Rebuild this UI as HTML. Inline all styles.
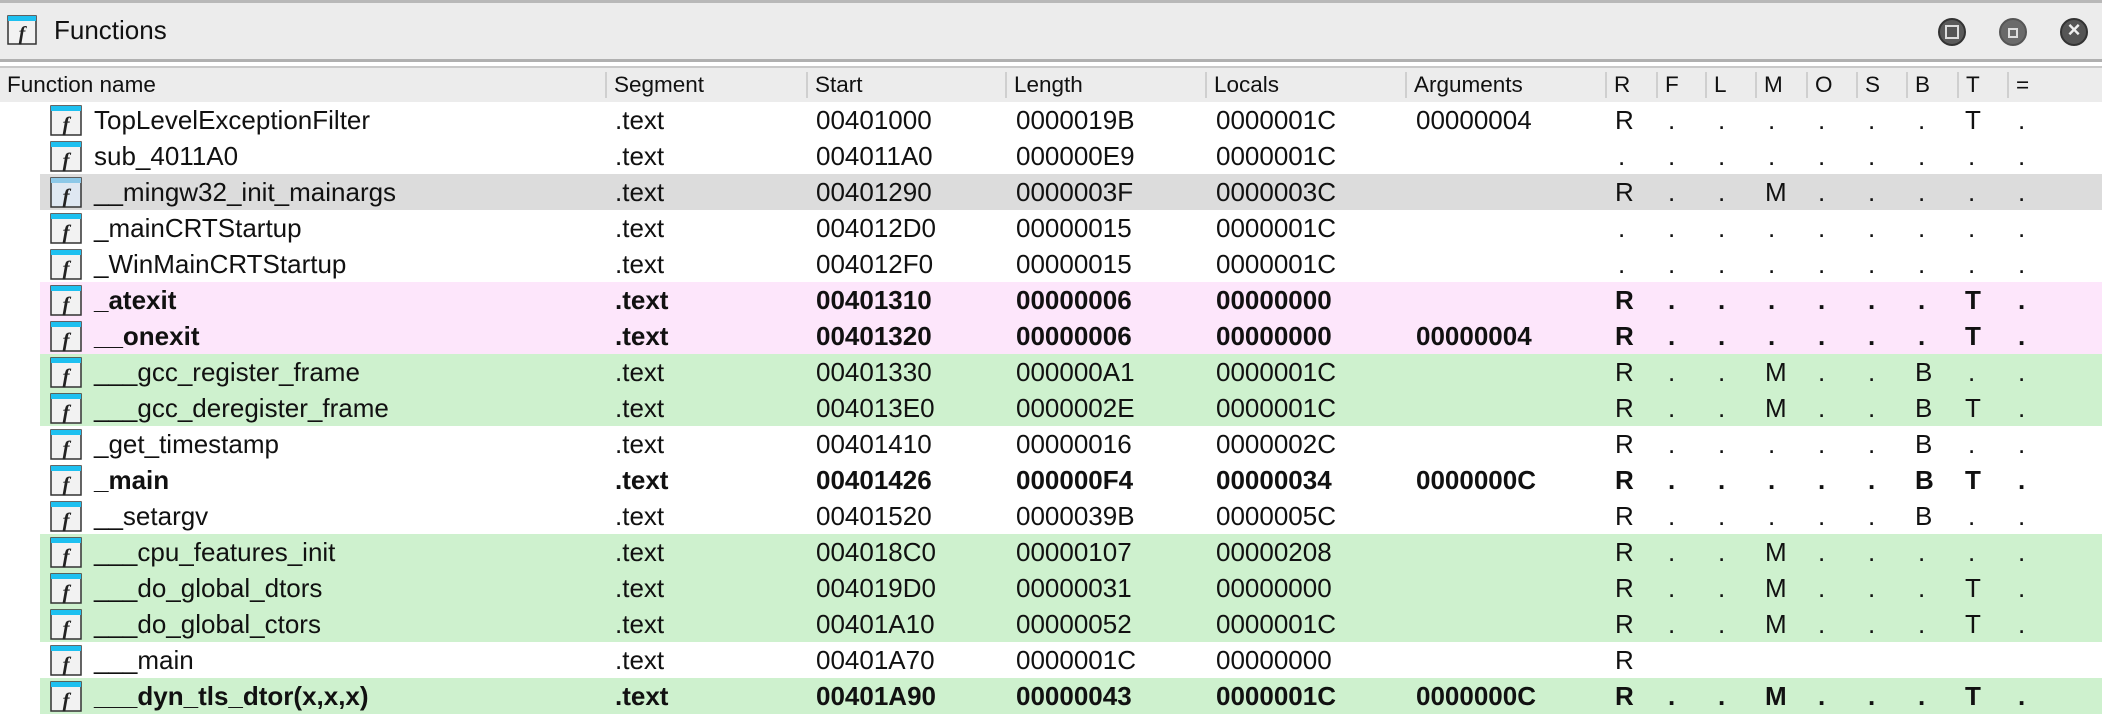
<!DOCTYPE html>
<html><head><meta charset="utf-8"><style>
*{margin:0;padding:0;box-sizing:border-box}
body{width:2102px;height:704px;overflow:hidden;background:#fff;font-family:"Liberation Sans",sans-serif;color:#111;position:relative}
.title{position:absolute;left:0;top:0;width:2102px;height:62px;background:#ececec;border-top:3px solid #b8b8b8;border-bottom:3px solid #b0b0b0}
.title .t{position:absolute;left:54px;top:12px;font-size:26px}
.hdr{position:absolute;left:0;top:66px;width:2102px;height:36px;background:#ececec;border-top:2px solid #c8c8c8;font-size:22.5px}
.hdr span{position:absolute;top:4px}
.sep{position:absolute;top:4px;width:2px;height:26px;background:#cfcfcf}
.row{position:absolute;left:40px;width:2062px;height:36px;font-size:26px}
.row span{position:absolute;top:3px;white-space:nowrap}
.b{font-weight:bold}
.pk{background:#fde6fb}.gr{background:#cef1ce}.gy{background:#dcdcdc}
.ic{position:absolute;left:10px;top:3px;width:32px;height:31px}
.btn{position:absolute;top:15px;width:28px;height:28px;border-radius:50%;background:#5a5a5a;border:2px solid #333}
</style></head><body>
<div class="title">
<svg style="position:absolute;left:7px;top:12px" width="30" height="30" viewBox="0 0 30 30"><rect x="1" y="1" width="28" height="28" fill="#f2f2f2" stroke="#333" stroke-width="1.5"/><rect x="1" y="1" width="28" height="5" fill="#1ec0f0"/><text x="15" y="25" font-family="Liberation Serif" font-style="italic" font-weight="bold" font-size="20" text-anchor="middle" fill="#222">f</text></svg>
<div class="t">Functions</div>
<div class="btn" style="left:1938px"><div style="position:absolute;left:5px;top:5px;width:14px;height:14px;border:2px solid #ddd;background:#555"></div></div>
<div class="btn" style="left:1999px;background:#6a6a6a;border-color:#555"><div style="position:absolute;left:7px;top:8px;width:10px;height:10px;border:2px solid #ddd"></div></div>
<div class="btn" style="left:2060px;background:#555"><div style="position:absolute;left:0;top:-3px;width:24px;text-align:center;color:#eee;font-weight:bold;font-size:22px">×</div></div>
</div>
<div class="hdr">
<span style="left:7px">Function name</span>
<div class="sep" style="left:605px"></div><span style="left:614px">Segment</span>
<div class="sep" style="left:806px"></div><span style="left:815px">Start</span>
<div class="sep" style="left:1005px"></div><span style="left:1014px">Length</span>
<div class="sep" style="left:1205px"></div><span style="left:1214px">Locals</span>
<div class="sep" style="left:1405px"></div><span style="left:1414px">Arguments</span>
<div class="sep" style="left:1605px"></div><span style="left:1614px">R</span>
<div class="sep" style="left:1656px"></div><span style="left:1665px">F</span>
<div class="sep" style="left:1705px"></div><span style="left:1714px">L</span>
<div class="sep" style="left:1755px"></div><span style="left:1764px">M</span>
<div class="sep" style="left:1806px"></div><span style="left:1815px">O</span>
<div class="sep" style="left:1856px"></div><span style="left:1865px">S</span>
<div class="sep" style="left:1906px"></div><span style="left:1915px">B</span>
<div class="sep" style="left:1957px"></div><span style="left:1966px">T</span>
<div class="sep" style="left:2007px"></div><span style="left:2016px">=</span>
</div>
<div id="rows"></div>
<script>
const D=[
["TopLevelExceptionFilter","00401000","0000019B","0000001C","00000004","R......T.",""],
["sub_4011A0","004011A0","000000E9","0000001C","",".........",""],
["__mingw32_init_mainargs","00401290","0000003F","0000003C","","R..M.....","gy"],
["_mainCRTStartup","004012D0","00000015","0000001C","",".........",""],
["_WinMainCRTStartup","004012F0","00000015","0000001C","",".........",""],
["_atexit","00401310","00000006","00000000","","R......T.","pk b"],
["__onexit","00401320","00000006","00000000","00000004","R......T.","pk b"],
["___gcc_register_frame","00401330","000000A1","0000001C","","R..M..B..","gr"],
["___gcc_deregister_frame","004013E0","0000002E","0000001C","","R..M..BT.","gr"],
["_get_timestamp","00401410","00000016","0000002C","","R.....B..",""],
["_main","00401426","000000F4","00000034","0000000C","R.....BT.","b"],
["__setargv","00401520","0000039B","0000005C","","R.....B..",""],
["___cpu_features_init","004018C0","00000107","00000208","","R..M.....","gr"],
["___do_global_dtors","004019D0","00000031","00000000","","R..M...T.","gr"],
["___do_global_ctors","00401A10","00000052","0000001C","","R..M...T.","gr"],
["___main","00401A70","0000001C","00000000","","R        ",""],
["___dyn_tls_dtor(x,x,x)","00401A90","00000043","0000001C","0000000C","R..M...T.","gr b"]];
const fx=[1615,1665,1715,1765,1815,1865,1915,1965,2015];
let h="";
D.forEach((r,i)=>{
const gy=r[6].includes("gy");
h+=`<div class="row ${r[6]}" style="top:${102+i*36}px">`+
`<svg class="ic" viewBox="0 0 32 31"><rect x="1" y="1" width="30" height="29" fill="${gy?'#dfe8f2':'#f2f2f2'}" stroke="#333" stroke-width="1.5"/><rect x="1" y="1" width="30" height="5" fill="${gy?'#8cc8e8':'#1ec0f0'}"/><text x="16" y="26" font-family="Liberation Serif" font-style="italic" font-weight="bold" font-size="21" text-anchor="middle" fill="#222">f</text></svg>`+
`<span style="left:54px">${r[0]}</span><span style="left:575px">.text</span><span style="left:776px">${r[1]}</span><span style="left:976px">${r[2]}</span><span style="left:1176px">${r[3]}</span><span style="left:1376px">${r[4]}</span>`;
[...r[5]].forEach((c,j)=>{if(c!=' ')h+=`<span style="left:${fx[j]-40+(c=='.'?3:0)}px">${c}</span>`});
h+="</div>";});
document.getElementById("rows").innerHTML=h;
</script>
</body></html>
